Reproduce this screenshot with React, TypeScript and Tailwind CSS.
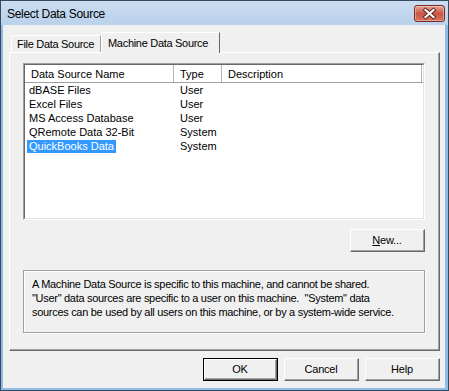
import React from "react";

const rows = [
  { name: "dBASE Files", type: "User" },
  { name: "Excel Files", type: "User" },
  { name: "MS Access Database", type: "User" },
  { name: "QRemote Data 32-Bit", type: "System" },
  { name: "QuickBooks Data", type: "System", selected: true },
];

// classic raised push button
const Button: React.FC<{ children: React.ReactNode; isDefault?: boolean; className?: string }> = ({
  children,
  isDefault,
  className = "",
}) => (
  <div className={`h-[23px] w-[75px] ${isDefault ? "border border-black" : ""} ${className}`}>
    <div className="h-full w-full border-t border-l border-white border-r border-b border-r-[#696969] border-b-[#696969]">
      <div className="flex h-full w-full items-center justify-center border-r border-b border-[#a0a0a0] bg-[#f0f0f0] pt-[1px] text-[11px] tracking-[-0.2px] text-black">
        {children}
      </div>
    </div>
  </div>
);

const HeaderCell: React.FC<{ label: string; width: string }> = ({ label, width }) => (
  <div className={`${width} flex h-full items-center border-r border-[#b5b5b5] pl-[6px] pt-[2px]`}>{label}</div>
);

export default function App() {
  return (
    <div className="h-[391px] w-[449px] border border-[#37495e] bg-[#8fbbe6] font-['Liberation_Sans',Arial,sans-serif] text-[11px] text-black">
      <div className="flex h-full flex-col">
        {/* title bar */}
        <div className="flex h-[24px] shrink-0 items-start justify-between bg-gradient-to-b from-[#cadcf1] to-[#b9d1ea] pl-[6px] pr-[3px]">
          <span className="pt-[6px] text-[12px] leading-[15px] tracking-[-0.3px]">Select Data Source</span>
          <div className="mt-[4px] h-[17px] w-[31px] rounded-[3px] border border-[#7a2b23] bg-gradient-to-b from-[#e6a595] via-[#cb5544] to-[#d7735f] shadow-[inset_0_0_0_1px_rgba(255,255,255,0.35)]">
            <svg width="29" height="15" viewBox="0 0 29 15">
              <path d="M10.5 4 L18.5 11 M18.5 4 L10.5 11" stroke="#5a2019" strokeWidth="4" strokeLinecap="square" />
              <path d="M10.5 4 L18.5 11 M18.5 4 L10.5 11" stroke="#fff" strokeWidth="2.2" strokeLinecap="square" />
            </svg>
          </div>
        </div>

        {/* client area */}
        <div className="ml-[2px] mr-[3px] mb-[2px] flex flex-1 flex-col bg-[#f0f0f0] pl-[6px] pr-[5px] pt-[7px]">
          {/* tabs */}
          <div className="flex h-[20px] items-end pl-[2px]">
            <div className="flex h-[17px] w-[90px] items-center border-t border-l border-white border-r border-r-[#a0a0a0] pl-[5px] pt-[1px] tracking-[-0.3px]">
              File Data Source
            </div>
            <div className="relative z-10 -mb-px flex h-[21px] w-[119px] items-start border-t border-l border-white border-r border-r-[#696969] bg-[#f0f0f0] pl-[6px] pt-[2px] tracking-[-0.3px]">
              Machine Data Source
            </div>
          </div>

          {/* tab panel */}
          <div className="h-[299px] border-t border-l border-white border-r border-b border-r-[#696969] border-b-[#696969]">
            <div className="flex h-full flex-col border-r border-b border-[#a0a0a0] pl-[13px] pt-[10px]">
              {/* list view */}
              <div className="h-[157px] w-[402px] border-t border-l border-[#a0a0a0] border-r border-b border-r-white border-b-white">
                <div className="flex h-full flex-col border-t border-l border-[#696969] border-r border-b border-r-[#e3e3e3] border-b-[#e3e3e3] bg-white">
                  <div className="flex h-[18px] shrink-0 border-b border-[#a0a0a0] bg-white">
                    <HeaderCell label="Data Source Name" width="w-[149px]" />
                    <HeaderCell label="Type" width="w-[48px]" />
                    <HeaderCell label="Description" width="w-[200px]" />
                  </div>
                  {rows.map((r) => (
                    <div key={r.name} className="flex h-[14px] pt-[1px] leading-[13px]">
                      <div className="w-[149px] pl-[2px]">
                        <span className={`inline-block h-[13px] px-[2px] ${r.selected ? "bg-[#3399ff] text-white" : ""}`}>
                          {r.name}
                        </span>
                      </div>
                      <div className="w-[48px] pl-[6px]">{r.type}</div>
                    </div>
                  ))}
                </div>
              </div>

              <div className="mt-[9px] flex w-[402px] justify-end">
                <Button>
                  <span>
                    <span className="underline">N</span>ew...
                  </span>
                </Button>
              </div>

              {/* info box */}
              <div className="mt-[18px] h-[63px] w-[402px] border border-[#a0a0a0] pl-[8px] pt-[6px] leading-[14px] tracking-[-0.3px] shadow-[inset_1px_1px_0_#fff,1px_1px_0_#fff]">
                <p>A Machine Data Source is specific to this machine, and cannot be shared.</p>
                <p className="whitespace-pre">"User" data sources are specific to a user on this machine.  "System" data</p>
                <p>sources can be used by all users on this machine, or by a system-wide service.</p>
              </div>
            </div>
          </div>

          {/* dialog buttons */}
          <div className="mt-[7px] flex justify-end gap-[6px]">
            <Button isDefault>OK</Button>
            <Button>Cancel</Button>
            <Button>Help</Button>
          </div>
        </div>
      </div>
    </div>
  );
}
